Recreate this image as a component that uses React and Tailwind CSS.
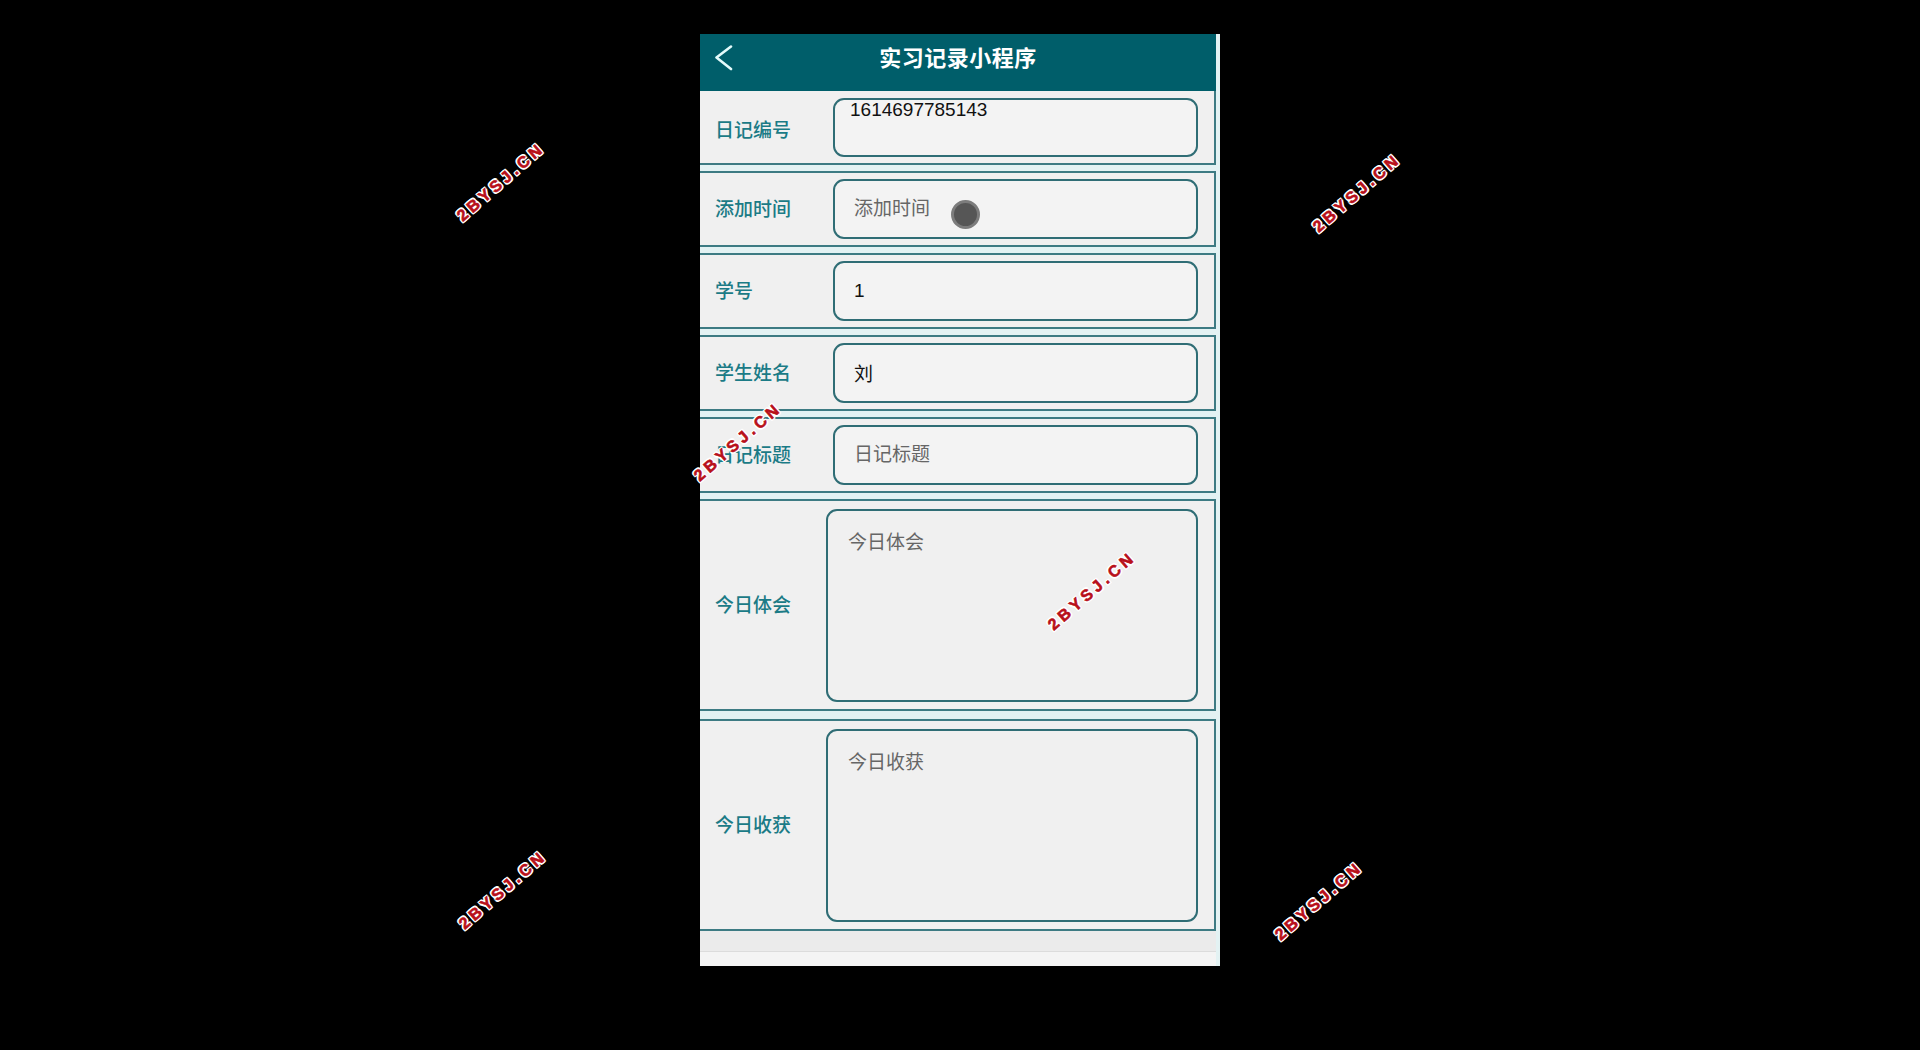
import React from "react";

const cjk = "font-['Liberation_Sans','Noto_Sans_CJK_SC',sans-serif]";

function Label({ children }) {
  return (
    <div className="flex-1 pl-[15px] text-[19px] font-medium text-[#1b7b86] leading-none">{children}</div>
  );
}

function Input({ children, value }) {
  return (
    <div
      className={`w-[365px] h-[60px] mr-[16px] rounded-[11px] border-2 border-[#2f6d75] bg-[#f3f3f3] flex items-center pl-[19px] text-[19px] ${
        value ? "text-[#111]" : "text-[#666]"
      }`}
    >
      {children}
    </div>
  );
}

function Row({ children, first, tall, className = "" }) {
  return (
    <div
      className={`flex items-center bg-[#f0f0f0] border-r-2 border-b-2 border-[#3d7b83] ${
        first ? "h-[74px] items-start pt-[7px]" : "border-t-2"
      } ${tall ? "h-[212px]" : first ? "" : "h-[76px]"} ${className}`}
    >
      {children}
    </div>
  );
}

function TextArea({ placeholder }) {
  return (
    <div className="w-[372px] h-[193px] mr-[16px] rounded-[11px] border-2 border-[#2f6d75] bg-[#f0f0f0] pl-[20px] pt-[22px] text-[19px] text-[#666] leading-none">
      {placeholder}
    </div>
  );
}

function Watermark({ className }) {
  return (
    <div
      className={`absolute -translate-x-1/2 -translate-y-1/2 -rotate-[41deg] whitespace-nowrap font-['Liberation_Sans',sans-serif] font-bold text-[16px] tracking-[4px] text-[#b8101a] leading-none [-webkit-text-stroke:0.6px_#b8101a] [text-shadow:-1.5px_-1.5px_0_#fff,1.5px_-1.5px_0_#fff,-1.5px_1.5px_0_#fff,1.5px_1.5px_0_#fff,0_1.5px_0_#fff,0_-1.5px_0_#fff,1.5px_0_0_#fff,-1.5px_0_0_#fff] ${className}`}
    >
      2BYSJ.CN
    </div>
  );
}

export default function App() {
  return (
    <div className={`relative w-[1920px] h-[1050px] bg-black overflow-hidden pt-[34px] ${cjk}`}>
      <div className="ml-[700px] w-[520px] h-[932px] bg-[#e3f2f3] pr-[4px] flex flex-col">
        <div className="h-[57px] bg-[#005e6a] relative flex items-center justify-center shrink-0 pb-[13px]">
          <svg
            className="absolute left-[14px] top-[11px]"
            width="20"
            height="26"
            viewBox="0 0 20 26"
            fill="none"
          >
            <path d="M17 1.5 L2.5 12.5 L17 24" stroke="#e4fbfb" strokeWidth="2.6" strokeLinecap="round" strokeLinejoin="round" />
          </svg>
          <span className="text-white font-bold text-[22px] tracking-[0.5px] leading-none font-['Noto_Sans_CJK_SC',sans-serif]">
            实习记录小程序
          </span>
        </div>

        <div className="flex flex-col gap-[6px]">
          <Row first>
            <div className="flex-1 self-center pl-[15px] text-[19px] font-medium text-[#1b7b86] leading-none">日记编号</div>
            <div className="w-[365px] h-[59px] mr-[16px] rounded-[11px] border-2 border-[#2f6d75] bg-[#f3f3f3] pl-[15px] text-[19px] text-[#111] leading-[20px]">
              1614697785143
            </div>
          </Row>
          <Row>
            <Label>添加时间</Label>
            <Input>
              <span>添加时间</span>
              <span className="ml-[21px] mt-[10px] w-[29px] h-[29px] rounded-full bg-[#565656] border-[3px] border-[#7c7c7c]" />
            </Input>
          </Row>
          <Row>
            <Label>学号</Label>
            <Input value>1</Input>
          </Row>
          <Row>
            <Label>学生姓名</Label>
            <Input value>
              <span className="mt-[4px]">刘</span>
            </Input>
          </Row>
          <Row>
            <Label>日记标题</Label>
            <Input>日记标题</Input>
          </Row>
          <Row tall>
            <Label>今日体会</Label>
            <TextArea placeholder="今日体会" />
          </Row>
          <Row tall className="mt-[2px]">
            <Label>今日收获</Label>
            <TextArea placeholder="今日收获" />
          </Row>
        </div>
        <div className="h-[21px] bg-[#ebebeb] border-b border-[#dcdcdc]" />
        <div className="flex-1 bg-[#f4f4f4]" />
      </div>

      <Watermark className="left-[501px] top-[182px]" />
      <Watermark className="left-[1357px] top-[193px]" />
      <Watermark className="left-[738px] top-[442px]" />
      <Watermark className="left-[1092px] top-[591px]" />
      <Watermark className="left-[503px] top-[890px]" />
      <Watermark className="left-[1319px] top-[901px]" />
    </div>
  );
}
